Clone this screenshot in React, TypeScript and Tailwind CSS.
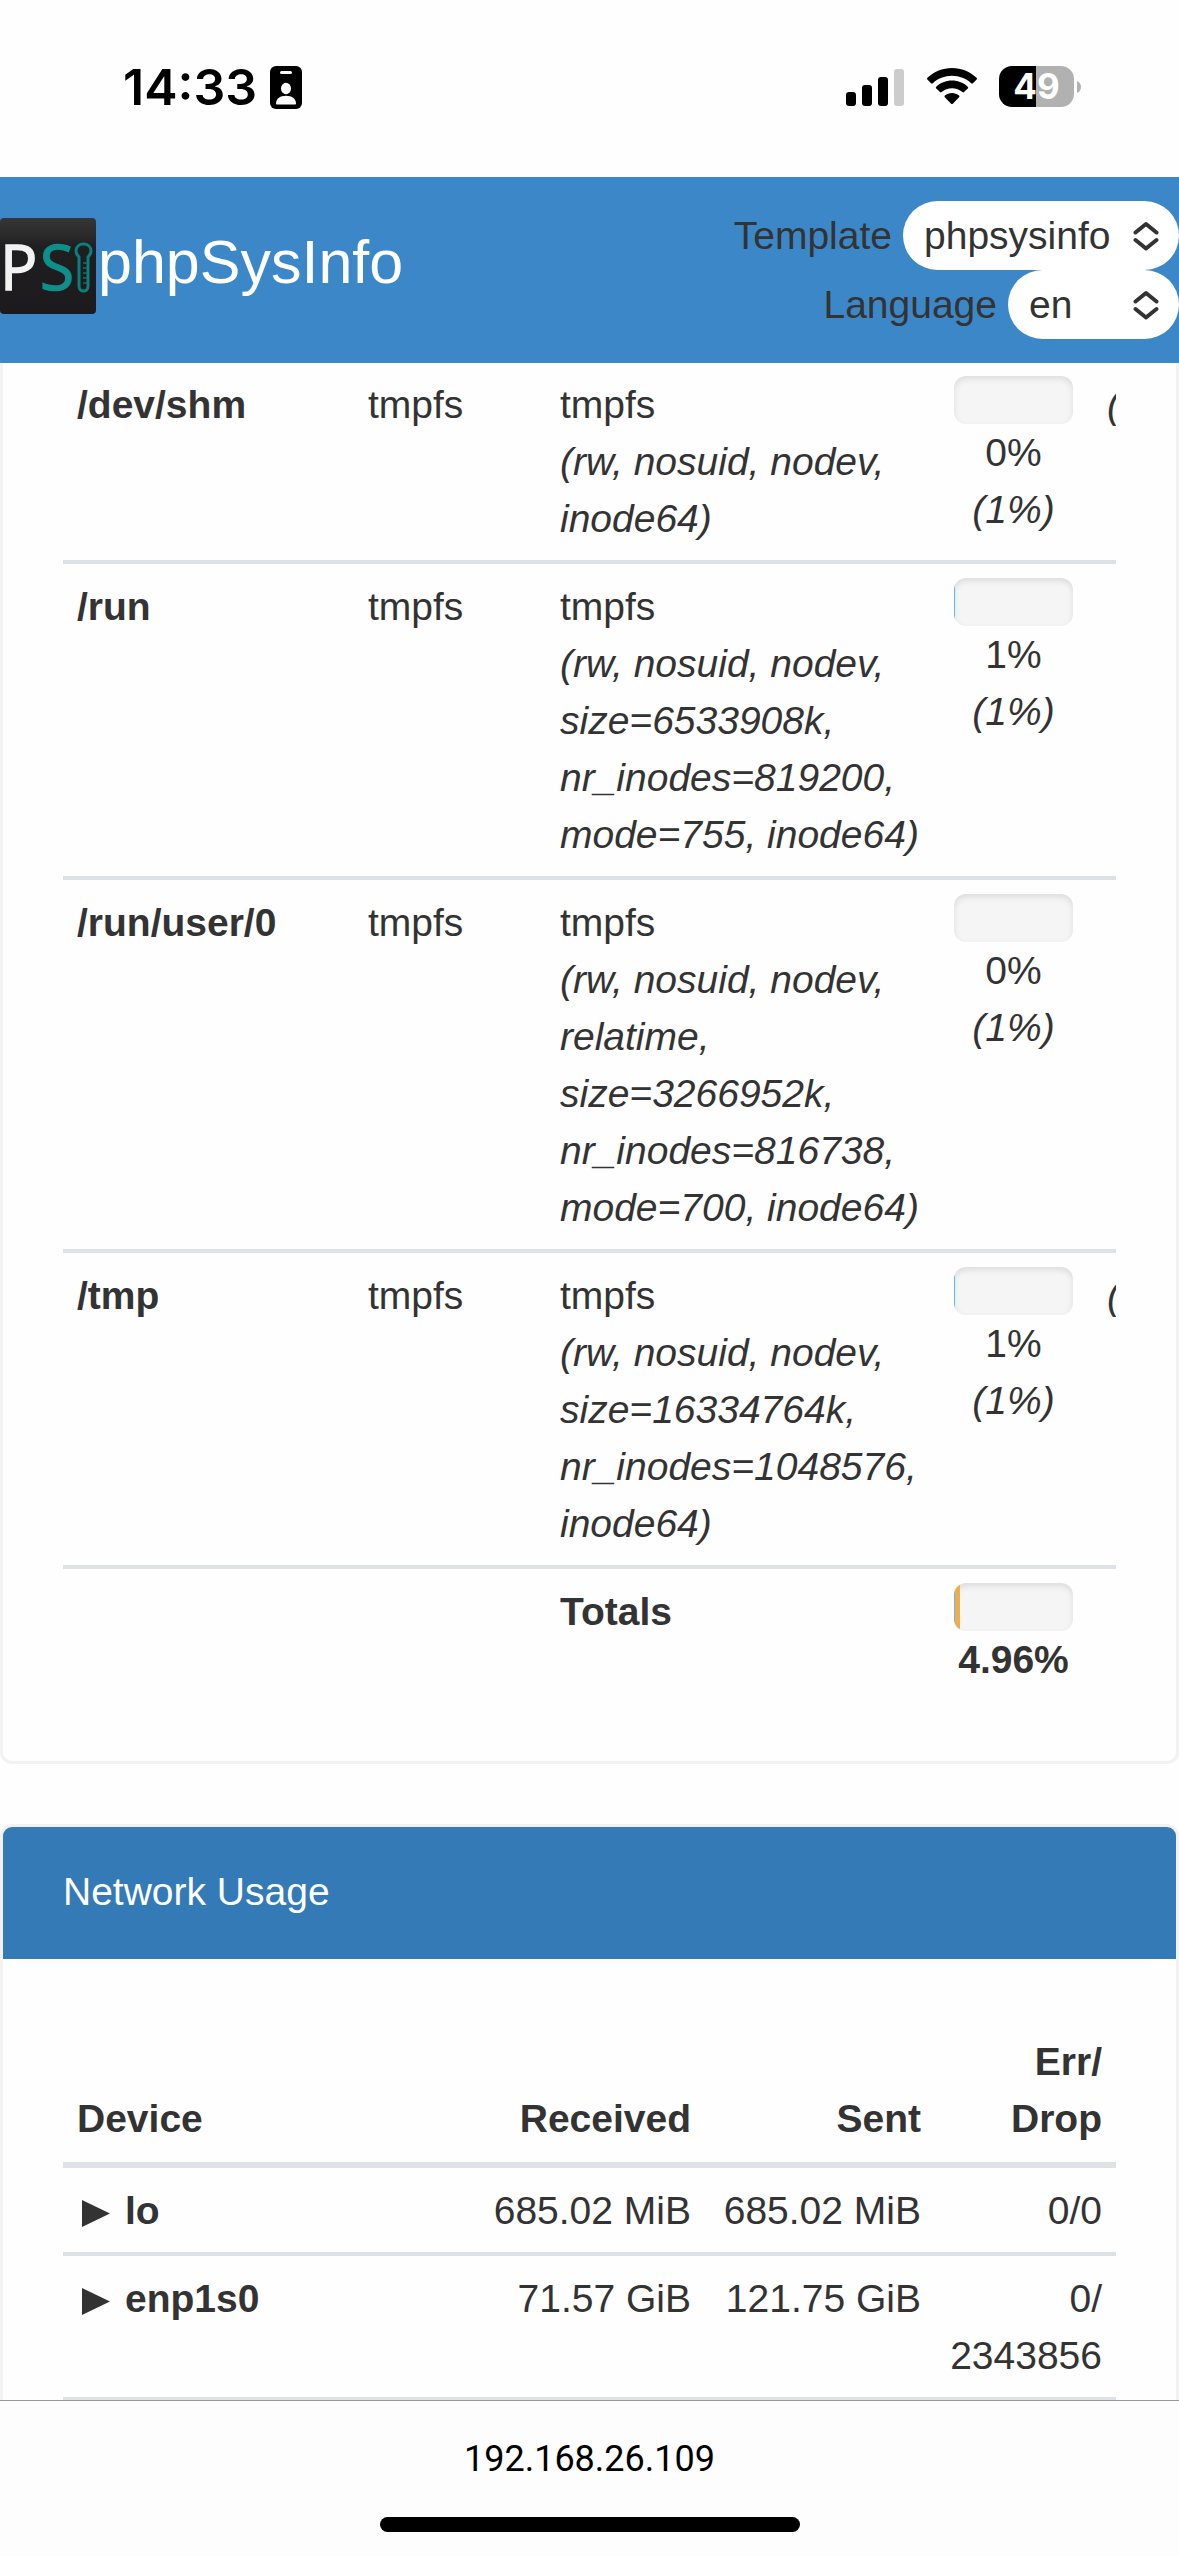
import clsx from 'clsx';
import * as React from 'react';

type Mount = {
  mountpoint: string;
  type: string;
  partition: string;
  options: string;
  usage: number;
  inodes: number;
  free?: string;
};

type NetDevice = {
  name: string;
  received: string;
  sent: string;
  errDrop: string;
};

const mounts: Mount[] = [
  {
    mountpoint: '/dev/shm',
    type: 'tmpfs',
    partition: 'tmpfs',
    options: '(rw, nosuid, nodev, inode64)',
    usage: 0,
    inodes: 1,
    free: '(',
  },
  {
    mountpoint: '/run',
    type: 'tmpfs',
    partition: 'tmpfs',
    options: '(rw, nosuid, nodev, size=6533908k, nr_inodes=819200, mode=755, inode64)',
    usage: 1,
    inodes: 1,
  },
  {
    mountpoint: '/run/user/0',
    type: 'tmpfs',
    partition: 'tmpfs',
    options: '(rw, nosuid, nodev, relatime, size=3266952k, nr_inodes=816738, mode=700, inode64)',
    usage: 0,
    inodes: 1,
  },
  {
    mountpoint: '/tmp',
    type: 'tmpfs',
    partition: 'tmpfs',
    options: '(rw, nosuid, nodev, size=16334764k, nr_inodes=1048576, inode64)',
    usage: 1,
    inodes: 1,
    free: '(',
  },
];

const devices: NetDevice[] = [
  { name: 'lo', received: '685.02 MiB', sent: '685.02 MiB', errDrop: '0/0' },
  { name: 'enp1s0', received: '71.57 GiB', sent: '121.75 GiB', errDrop: '0/\n2343856' },
];

const StatusBar = () => (
  <div className="flex h-[177px] shrink-0 items-start justify-between pl-[123px] pr-[98px] pt-[66px] text-black">
    <div className="flex items-center gap-[13px]">
      <span className="font-['Inter',sans-serif] text-[50px] font-semibold leading-[43px]">14:33</span>
      <svg width="32" height="43" viewBox="0 0 32 43" aria-hidden="true">
        <rect width="32" height="43" rx="6" fill="#000" />
        <rect x="10" y="5" width="12" height="3" rx="1.5" fill="#fff" />
        <ellipse cx="16" cy="22.500" rx="5" ry="5.800" fill="#fff" />
        <path d="M6 37.500c0-5 4.500-7.700 10-7.700s10 2.700 10 7.700c0 .8-.5 1-1.200 1H7.200c-.7 0-1.200-.2-1.200-1z" fill="#fff" />
      </svg>
    </div>
    <div className="flex items-center">
      <svg className="mr-[22px]" width="59" height="38" viewBox="0 0 59 38" aria-hidden="true">
        <rect x="0" y="24" width="10" height="14" rx="3" />
        <rect x="16" y="17" width="10" height="21" rx="3" />
        <rect x="32" y="9" width="10" height="29" rx="3" />
        <rect x="48" y="1" width="10" height="37" rx="3" fill="#ccc" />
      </svg>
      <svg className="mr-[22px]" width="50" height="37" viewBox="0 0 50 37" aria-hidden="true">
        <path d="M25 0c9.500 0 18.200 3.700 24.600 9.800.5.500.5 1.200 0 1.700l-3.700 3.700c-.5.500-1.200.5-1.700 0C39.200 10.500 32.400 7.700 25 7.700S10.800 10.500 5.800 15.200c-.5.500-1.200.5-1.700 0L.4 11.500c-.5-.5-.5-1.200 0-1.700C6.800 3.700 15.500 0 25 0z" />
        <path d="M25 12.600c6.100 0 11.600 2.300 15.800 6.100.5.500.5 1.200 0 1.700l-3.800 3.700c-.4.500-1.100.5-1.600 0-2.800-2.400-6.400-3.900-10.400-3.900s-7.600 1.500-10.400 3.900c-.5.500-1.200.5-1.600 0l-3.800-3.700c-.5-.5-.5-1.200 0-1.700 4.200-3.800 9.700-6.100 15.800-6.100z" />
        <path d="M25 25c2.700 0 5.100.9 7.100 2.500.5.500.5 1.200 0 1.700l-6.300 6.500c-.5.500-1.200.5-1.700 0l-6.300-6.500c-.4-.5-.4-1.200.1-1.700 2-1.600 4.400-2.500 7.100-2.500z" />
      </svg>
      <div className="flex h-[41px] w-[75px] items-center justify-center overflow-hidden rounded-[13px] bg-[linear-gradient(to_right,#000_50%,#b1b1b1_50%)] font-['Inter',sans-serif] text-[35px] font-bold leading-[41px] text-white">
        49
      </div>
      <svg className="ml-[3px]" width="4" height="12" viewBox="0 0 4 12" aria-hidden="true">
        <path d="M0 0c2.500.9 4 3.200 4 6s-1.500 5.100-4 6z" fill="#b1b1b1" />
      </svg>
    </div>
  </div>
);

const Logo = () => (
  <svg width="96" height="96" viewBox="0 0 96 96" aria-hidden="true">
    <defs>
      <linearGradient id="logo-bg" x1="0" y1="0" x2="0" y2="1">
        <stop offset="0" stopColor="#373637" />
        <stop offset="0.180" stopColor="#2b2a2b" />
        <stop offset="0.300" stopColor="#1f1e20" />
        <stop offset="1" stopColor="#1c1a1d" />
      </linearGradient>
    </defs>
    <rect width="96" height="96" rx="4" fill="url(#logo-bg)" />
    <text x="0" y="72" fill="#f2f2f2" stroke="#f2f2f2" strokeWidth="1.5" fontFamily="Open Sans, sans-serif" fontSize="62">P</text>
    <text x="40" y="72" fill="#0e8f8a" stroke="#0e8f8a" strokeWidth="1.5" fontFamily="Open Sans, sans-serif" fontSize="62">S</text>
    <path
      d="M79 39c-2-2-3-3.500-3-6 0-4 3-7 7.500-7s7.500 3 7.500 7c0 2.500-1 4-3 6v29c0 3-2 5-4.500 5S79 71 79 68z"
      fill="none"
      stroke="#0c7f7b"
      strokeWidth="3"
    />
    <path d="M83 45h4M83 50h4M83 55h4M83 60h4M83 65h4" stroke="#0c6f6c" strokeWidth="1.500" />
  </svg>
);

type PickerProps = {
  id: string;
  label: string;
  options: string[];
  className?: string;
};

const Picker = ({ id, label, options, className }: PickerProps) => (
  <div className="flex items-center gap-[11px]">
    <label htmlFor={id}>{label}</label>
    <div className="relative">
      <select
        id={id}
        className={clsx('block h-[69px] appearance-none rounded-full bg-white pl-[21px] pr-[64px] text-[#333]', className)}
      >
        {options.map((option) => (
          <option key={option}>{option}</option>
        ))}
      </select>
      <svg
        className="pointer-events-none absolute right-[20px] top-[20px]"
        width="26"
        height="30"
        viewBox="0 0 26 30"
        fill="none"
        stroke="#333"
        strokeWidth="4"
        strokeLinecap="round"
        strokeLinejoin="round"
        aria-hidden="true"
      >
        <path d="M2.500 11.500 13 3l10.500 8.500M2.500 19 13 27.500 23.500 19" />
      </svg>
    </div>
  </div>
);

type UsageBarProps = {
  parts: { percent: number; warn?: boolean }[];
};

const UsageBar = ({ parts }: UsageBarProps) => (
  <div className="flex h-[48px] overflow-hidden rounded-[12px] bg-[#f5f5f5] shadow-[inset_0_3px_6px_rgba(0,0,0,0.1)]">
    {parts.map(({ percent, warn }, i) => (
      <div
        key={i}
        className={warn ? 'bg-[#f0ad4e]' : 'bg-[#5bc0de]'}
        style={{ width: `${percent}%` }}
      />
    ))}
  </div>
);

const cell = 'px-[14px] pt-[14px] pb-[13px] align-top';
const line = 'border-t-4 border-[#dee2e6]';

const Filesystems = () => (
  <section className="rounded-b-[12px] border-x-[3px] border-b-[3px] border-[#f2f2f2] px-[60px] pb-[60px]">
    <div className="overflow-hidden">
      <table className="w-[calc(100%+24px)] table-fixed border-separate border-spacing-0 text-left">
        <colgroup>
          <col />
          <col className="w-[192px]" />
          <col className="w-[394px]" />
          <col className="w-[147px]" />
          <col className="w-[53px]" />
        </colgroup>
        <tbody>
          {mounts.map((mount, i) => {
            const td = clsx(cell, i > 0 && line);
            return (
              <tr key={mount.mountpoint}>
                <th scope="row" className={clsx(td, 'font-bold')}>{mount.mountpoint}</th>
                <td className={td}>{mount.type}</td>
                <td className={td}>
                  {mount.partition}
                  <br />
                  <i>{mount.options}</i>
                </td>
                <td className={clsx(td, 'text-center')}>
                  <UsageBar parts={[{ percent: mount.usage }]} />
                  {mount.usage}%
                  <br />
                  <i>({mount.inodes}%)</i>
                </td>
                <td className={clsx(td, 'text-center')}>
                  <i>{mount.free}</i>
                </td>
              </tr>
            );
          })}
        </tbody>
        <tfoot>
          <tr className="font-bold">
            <td className={clsx(cell, line)} />
            <td className={clsx(cell, line)} />
            <td className={clsx(cell, line)}>Totals</td>
            <td className={clsx(cell, line, 'text-center')}>
              <UsageBar parts={[{ percent: 1 }, { percent: 4, warn: true }]} />
              4.96%
            </td>
            <td className={clsx(cell, line)} />
          </tr>
        </tfoot>
      </table>
    </div>
  </section>
);

const Network = () => {
  const th = 'px-[14px] pt-[14px] pb-[15px] align-bottom font-bold border-b-[6px] border-[#dee2e6]';

  return (
    <section className="mt-[60px] rounded-[12px] border-[3px] border-[#f2f2f2]">
      <h2 className="rounded-t-[9px] bg-[#337ab7] px-[60px] pb-[39px] pt-[36px] text-white">Network Usage</h2>
      <div className="p-[60px]">
        <table className="w-full table-fixed border-separate border-spacing-0 text-right">
          <colgroup>
            <col />
            <col className="w-[230px]" />
            <col className="w-[230px]" />
            <col className="w-[181px]" />
          </colgroup>
          <thead>
            <tr>
              <th className={clsx(th, 'text-left')}>Device</th>
              <th className={th}>Received</th>
              <th className={th}>Sent</th>
              <th className={th}>Err/<br />Drop</th>
            </tr>
          </thead>
          <tbody>
            {devices.map((device, i) => {
              const td = clsx(cell, i > 0 && line, i === devices.length - 1 && 'border-b-4');
              return (
                <tr key={device.name}>
                  <th scope="row" className={clsx(td, 'text-left')}>
                    <button type="button" className="flex items-center font-bold">
                      <svg width="48" height="33" viewBox="0 0 48 33" aria-hidden="true">
                        <path d="M5 6l28 13.500L5 33z" fill="#333" />
                      </svg>
                      {device.name}
                    </button>
                  </th>
                  <td className={td}>{device.received}</td>
                  <td className={td}>{device.sent}</td>
                  <td className={clsx(td, 'whitespace-pre-line')}>{device.errDrop}</td>
                </tr>
              );
            })}
          </tbody>
        </table>
      </div>
    </section>
  );
};

const App: React.FunctionComponent = () => (
  <div className="flex h-screen flex-col overflow-hidden bg-[#fefefe] font-['Liberation_Sans',Arial,sans-serif] text-[39px] leading-[57px] text-[#333]">
    <StatusBar />
    <header className="relative z-10 flex shrink-0 items-center justify-between bg-[#3c87c8] py-6">
      <div className="flex items-center gap-[2px] pb-2">
        <Logo />
        <h1 className="pb-2 text-[61px] leading-[66px] text-white">phpSysInfo</h1>
      </div>
      <div className="flex flex-col items-end">
        <Picker id="template" label="Template" options={['phpsysinfo']} className="w-[276px]" />
        <Picker id="language" label="Language" options={['en']} className="w-[171px]" />
      </div>
    </header>
    <main className="-mt-px min-h-0 flex-1 overflow-hidden">
      <Filesystems />
      <Network />
    </main>
    <footer className="flex h-[156px] shrink-0 flex-col items-center justify-between border-t border-[#999] bg-[#fdfdfd] pb-6 pt-[34px]">
      <span className="font-['Roboto',sans-serif] text-[36px] leading-[48px] text-black">192.168.26.109</span>
      <div className="h-[15px] w-[420px] rounded-full bg-black" />
    </footer>
  </div>
);

export default App;
